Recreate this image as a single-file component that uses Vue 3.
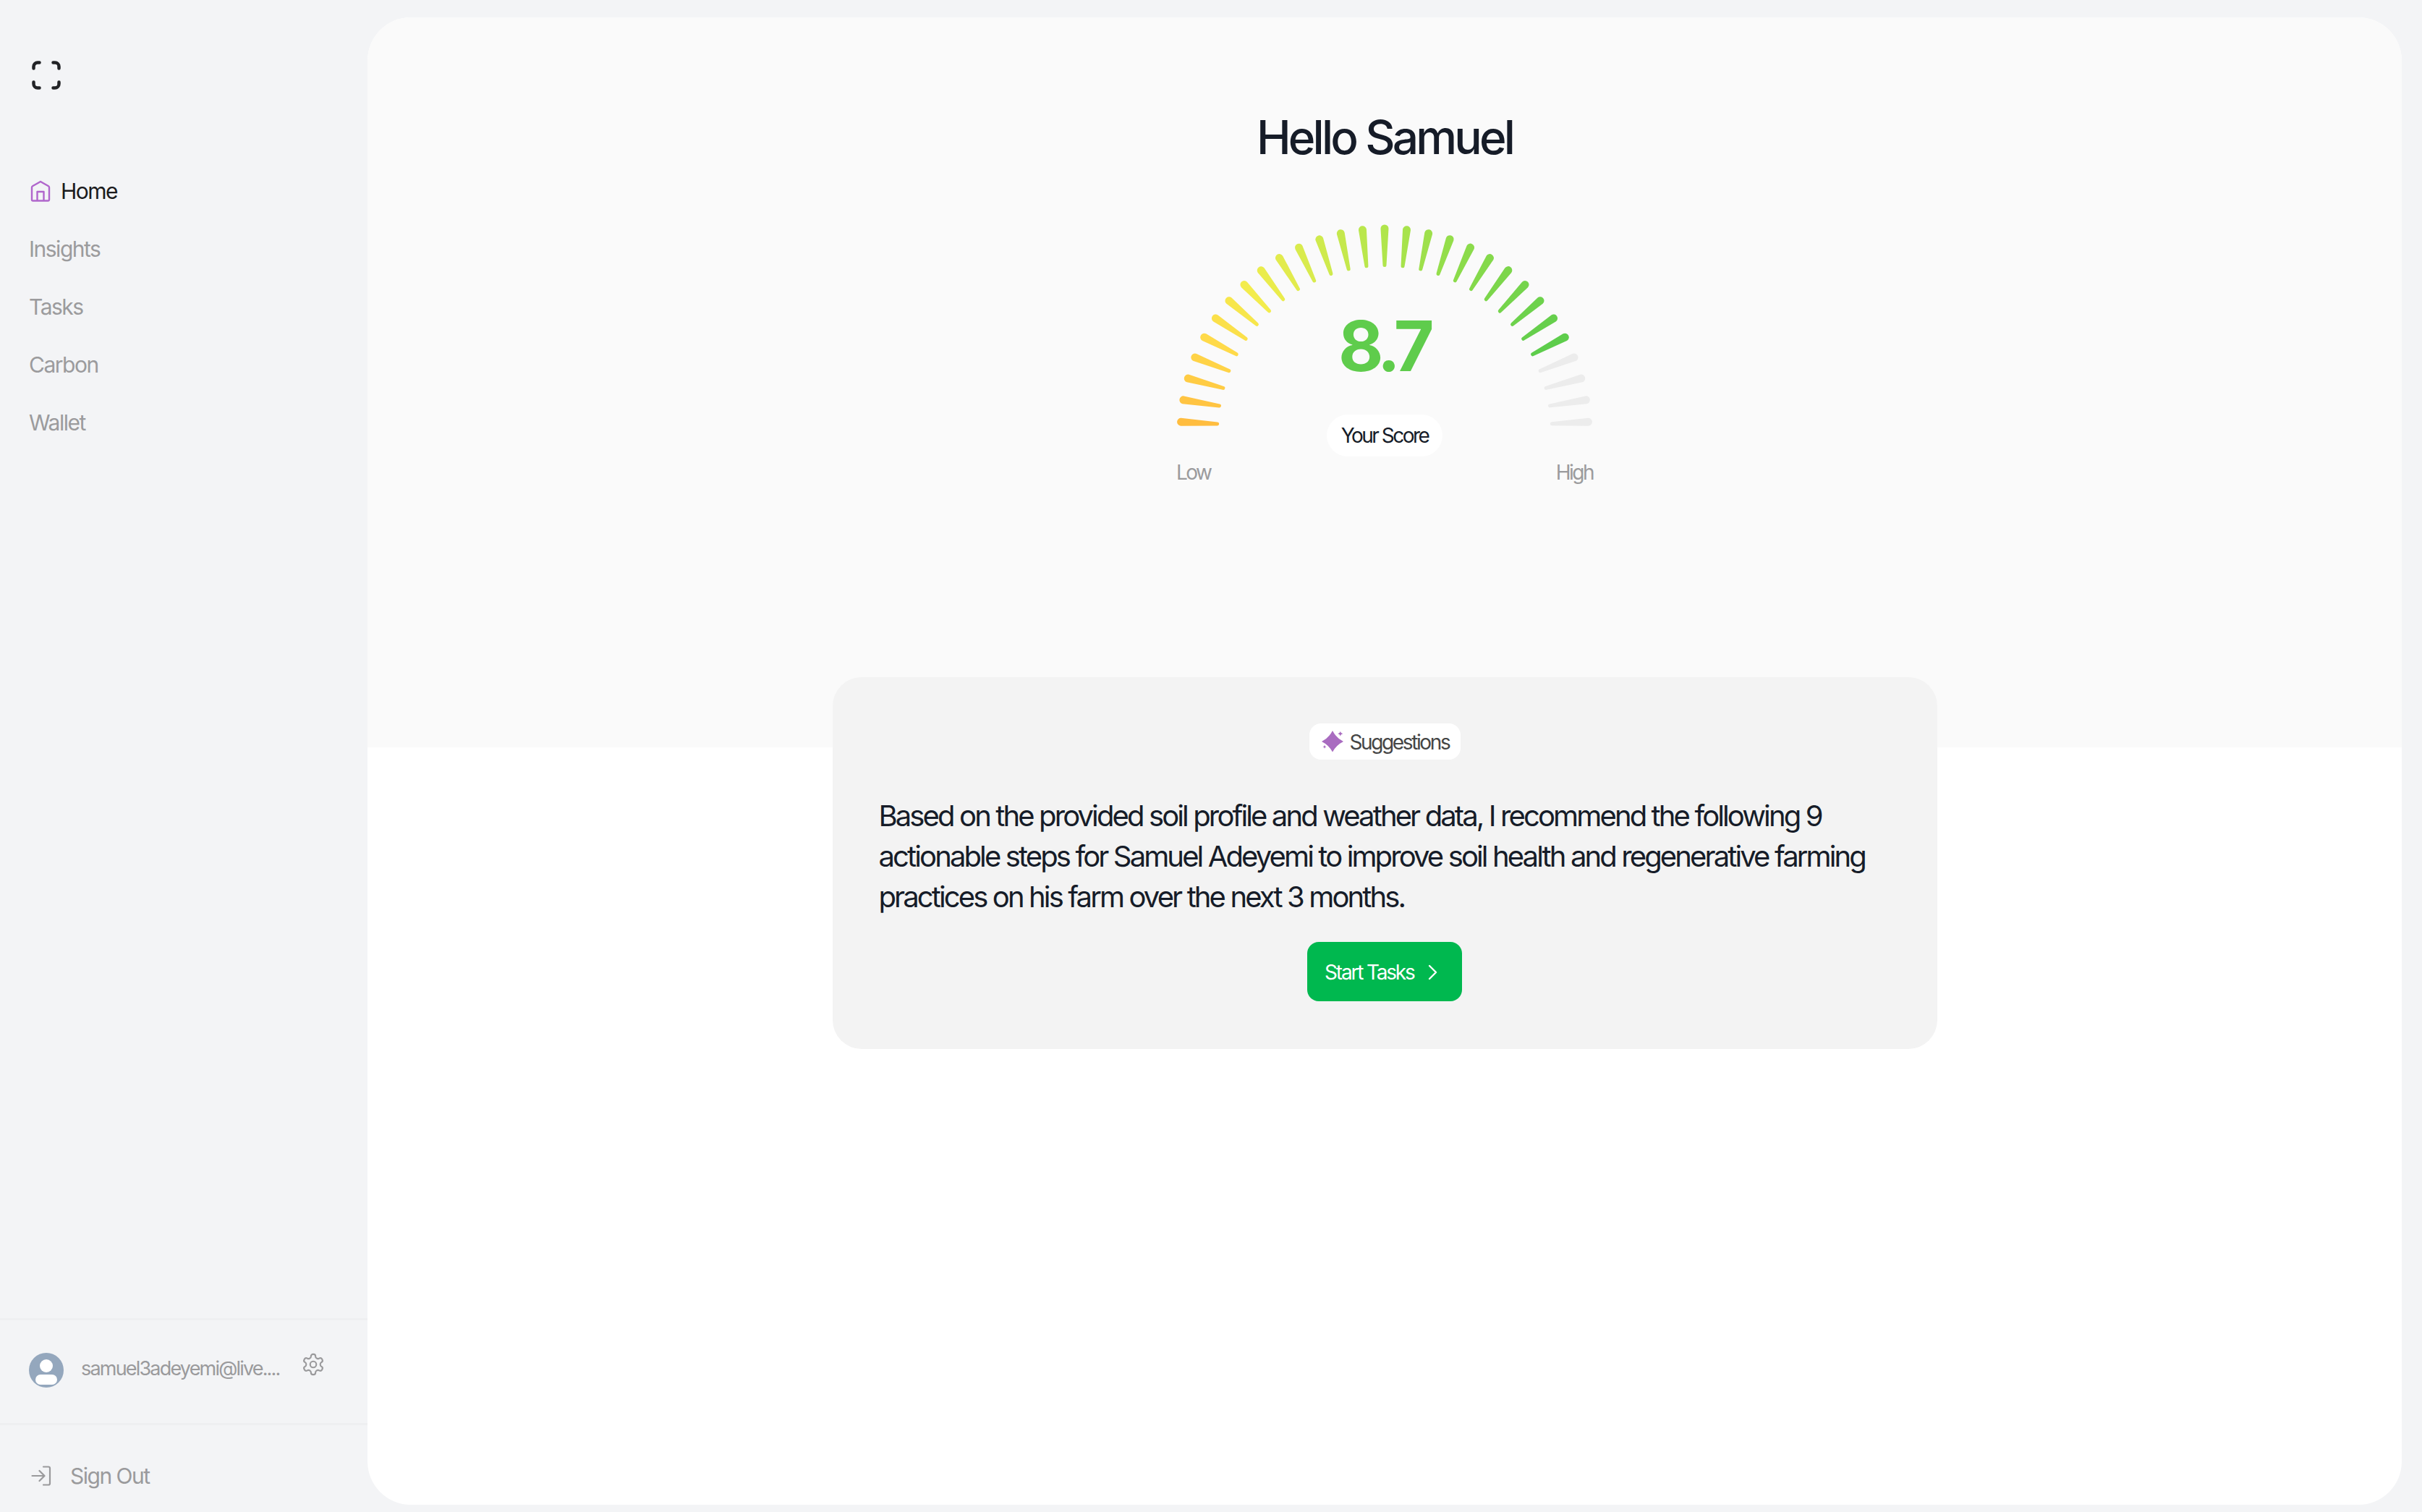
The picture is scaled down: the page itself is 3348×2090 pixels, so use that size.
<template>
  <div class="layout">
    <aside class="sidebar">
      <div class="logo">
        <svg width="40" height="40" viewBox="0 0 40 40" fill="none" stroke="#222326" stroke-width="4.500" stroke-linecap="round">
          <path d="M10.500 2.500H8A5.500 5.500 0 0 0 2.500 8v2.500" />
          <path d="M29.500 2.500H32A5.500 5.500 0 0 1 37.500 8v2.500" />
          <path d="M2.500 29.500V32A5.500 5.500 0 0 0 8 37.500h2.500" />
          <path d="M37.500 29.500V32a5.500 5.500 0 0 1-5.500 5.500h-2.500" />
        </svg>
      </div>

      <nav class="nav">
        <a class="nav-item active">
          <svg width="30" height="30" viewBox="0 0 30 30" fill="none" stroke="#b066cc" stroke-width="2.400" stroke-linejoin="round">
            <path d="M16 2 5 8.300a2 2 0 0 0-1 1.700V27a1.500 1.500 0 0 0 1.500 1.500h21A1.500 1.500 0 0 0 28 27V10a2 2 0 0 0-1-1.700Z" />
            <path d="M11.500 28.500V16h9v12.500" />
          </svg>
          <span>Home</span>
        </a>
        <a v-for="item in links" :key="item" class="nav-item">{{ item }}</a>
      </nav>

      <div class="account">
        <svg class="avatar" width="48" height="48" viewBox="0 0 48 48">
          <circle cx="24" cy="24" r="24" fill="#94a7bd" />
          <circle cx="24" cy="18" r="9" fill="#fff" />
          <rect x="9" y="30" width="30" height="14" rx="7" fill="#fff" />
        </svg>
        <span class="email">samuel3adeyemi@live....</span>
        <svg class="gear" width="34" height="34" viewBox="0 0 24 24" fill="none" stroke="#9a9a9c" stroke-width="1.500" stroke-linecap="round" stroke-linejoin="round">
          <path d="M12.220 2h-.440a2 2 0 0 0-2 2v.180a2 2 0 0 1-1 1.730l-.430.250a2 2 0 0 1-2 0l-.150-.080a2 2 0 0 0-2.730.730l-.220.380a2 2 0 0 0 .730 2.730l.150.100a2 2 0 0 1 1 1.720v.510a2 2 0 0 1-1 1.740l-.150.090a2 2 0 0 0-.730 2.730l.220.380a2 2 0 0 0 2.730.730l.150-.080a2 2 0 0 1 2 0l.430.250a2 2 0 0 1 1 1.730V20a2 2 0 0 0 2 2h.440a2 2 0 0 0 2-2v-.180a2 2 0 0 1 1-1.730l.430-.250a2 2 0 0 1 2 0l.150.080a2 2 0 0 0 2.730-.730l.220-.390a2 2 0 0 0-.730-2.730l-.150-.080a2 2 0 0 1-1-1.740v-.500a2 2 0 0 1 1-1.740l.150-.090a2 2 0 0 0 .730-2.730l-.220-.380a2 2 0 0 0-2.730-.730l-.150.080a2 2 0 0 1-2 0l-.430-.250a2 2 0 0 1-1-1.730V4a2 2 0 0 0-2-2z" />
          <circle cx="12" cy="12" r="3" />
        </svg>
      </div>

      <a class="signout">
        <svg width="28" height="28" viewBox="0 0 28 28" fill="none" stroke="#9a9a9c" stroke-width="2.200" stroke-linecap="round" stroke-linejoin="round">
          <path d="M17 1.500h7a2 2 0 0 1 2 2v21a2 2 0 0 1-2 2h-7" />
          <path d="M1.500 14H18" />
          <path d="m11.500 7 7 7-7 7" />
        </svg>
        <span>Sign Out</span>
      </a>
    </aside>

    <main class="main">
      <section class="hero">
        <h1 class="title">Hello Samuel</h1>
        <div class="gauge">
          <svg width="600" height="300" viewBox="0 0 600 300">
            <path v-for="tick in ticks" :key="tick.id" :d="tick.d" :fill="tick.color" />
          </svg>
          <div class="score">8.7</div>
          <div class="score-label">Your Score</div>
          <span class="low">Low</span>
          <span class="high">High</span>
        </div>
      </section>

      <section class="card">
        <div class="badge">
          <svg width="32" height="32" viewBox="0 0 32 32" fill="#a96cc0">
            <path d="M16 1Q21 11 31 16Q21 21 16 30.500Q11 21 1 16Q11 11 16 1Z" />
            <path d="M26.800 1.500c.3 2 1 3 3.700 3.700-2.700.7-3.400 1.700-3.700 3.700-.3-2-1-3-3.700-3.700 2.700-.7 3.400-1.700 3.700-3.700Z" />
            <path d="M5 20.500c.2 1.700.9 2.400 2.800 2.800-1.900.4-2.600 1.100-2.800 2.800-.2-1.700-.9-2.400-2.800-2.800 1.900-.4 2.600-1.100 2.800-2.800Z" />
          </svg>
          <span>Suggestions</span>
        </div>
        <p class="text">
          Based on the provided soil profile and weather data, I recommend the following 9
          actionable steps for Samuel Adeyemi to improve soil health and regenerative farming
          practices on his farm over the next 3 months.
        </p>
        <button class="start">
          <span>Start Tasks</span>
          <svg width="14" height="22" viewBox="0 0 14 22" fill="none" stroke="#fff" stroke-width="2.400" stroke-linecap="round" stroke-linejoin="round">
            <path d="m3 2 9 9-9 9" />
          </svg>
        </button>
      </section>
    </main>
  </div>
</template>

<script setup>
const links = ['Insights', 'Tasks', 'Carbon', 'Wallet']

// colour stops for the 25 lit ticks, the last 4 stay grey
const stops = [
  [0, [255, 189, 63]],
  [4, [255, 218, 73]],
  [7, [243, 236, 76]],
  [10, [217, 235, 77]],
  [14, [176, 229, 76]],
  [18, [139, 219, 75]],
  [24, [94, 205, 76]],
]

function colorAt(i) {
  if (i > 24) return '#ececec'
  for (let s = 0; s < stops.length - 1; s++) {
    const [a, ca] = stops[s]
    const [b, cb] = stops[s + 1]
    if (i <= b) {
      const t = (i - a) / (b - a)
      const c = ca.map((v, k) => Math.round(v + (cb[k] - v) * t))
      return `rgb(${c.join(',')})`
    }
  }
}

const cx = 300
const cy = 298
const outer = 282
const inner = 231.5
const f = (n) => n.toFixed(2)

const ticks = Array.from({ length: 29 }, (_, i) => {
  const a = ((3 + i * 6.214) * Math.PI) / 180
  const ux = -Math.cos(a)
  const uy = -Math.sin(a)
  const nx = uy
  const ny = -ux
  const ox = cx + ux * outer
  const oy = cy + uy * outer
  const ix = cx + ux * inner
  const iy = cy + uy * inner
  const w = 5.5
  const v = 2.5
  const d =
    `M${f(ox + nx * w)} ${f(oy + ny * w)}` +
    `A${w} ${w} 0 0 1 ${f(ox - nx * w)} ${f(oy - ny * w)}` +
    `L${f(ix - nx * v)} ${f(iy - ny * v)}` +
    `A${v} ${v} 0 0 1 ${f(ix + nx * v)} ${f(iy + ny * v)}Z`
  return { id: i, d, color: colorAt(i) }
})
</script>

<style>
body {
  margin: 0;
  background: #f3f4f6;
}
</style>

<style scoped>
.layout {
  display: flex;
  height: 2090px;
  background: #f3f4f6;
  font-family: Inter, "Liberation Sans", sans-serif;
  color: #161c28;
}

.sidebar {
  width: 508px;
  flex-shrink: 0;
  display: flex;
  flex-direction: column;
}

.logo {
  padding: 84px 0 0 44px;
  height: 40px;
}

.nav {
  margin-top: 100px;
  padding-left: 40px;
  display: flex;
  flex-direction: column;
}

.nav-item {
  height: 80px;
  display: flex;
  align-items: center;
  gap: 14px;
  font-size: 30px;
  letter-spacing: -0.05em;
  color: #9b9b9d;
}

.nav-item.active {
  color: #1b1b1d;
}

.account {
  margin-top: auto;
  height: 138px;
  padding-bottom: 4px;
  border-top: 3px solid #eeeff1;
  border-bottom: 3px solid #eeeff1;
  padding-left: 40px;
  display: flex;
  align-items: center;
  gap: 24px;
}

.email {
  font-size: 27px;
  letter-spacing: -0.067em;
  color: #9a9a9c;
  width: 280px;
  white-space: nowrap;
  margin-top: -6px;
}

.gear {
  margin-top: -16px;
}

.signout {
  height: 120px;
  box-sizing: border-box;
  padding: 20px 0 0 43px;
  display: flex;
  align-items: center;
  gap: 26px;
  font-size: 30px;
  letter-spacing: -0.05em;
  color: #9a9a9c;
}

.main {
  flex: 1;
  margin: 24px 28px 10px 0;
  background: #fff;
  border-radius: 60px;
  overflow: hidden;
}

.hero {
  height: 1009px;
  padding-top: 128px;
  box-sizing: border-box;
  background: #fafafa;
  display: flex;
  flex-direction: column;
  align-items: center;
}

.title {
  margin: 0;
  font-size: 64px;
  line-height: 76px;
  font-weight: 500;
  letter-spacing: -0.06em;
  color: #161c28;
}

.gauge {
  position: relative;
  width: 600px;
  height: 380px;
  margin-top: 72px;
}

.gauge svg {
  display: block;
}

.score {
  position: absolute;
  left: 0;
  right: 2px;
  top: 120px;
  text-align: center;
  font-size: 96px;
  line-height: 116px;
  font-weight: 700;
  letter-spacing: -0.07em;
  color: #5fcc4c;
}

.score-label {
  position: absolute;
  left: 220px;
  top: 273px;
  width: 160px;
  height: 58px;
  border-radius: 29px;
  background: #fff;
  display: flex;
  align-items: center;
  justify-content: center;
  font-size: 28px;
  letter-spacing: -0.09em;
  color: #161c28;
}

.low,
.high {
  position: absolute;
  top: 336px;
  font-size: 28px;
  line-height: 34px;
  letter-spacing: -0.09em;
  color: #9b9b9d;
}

.low {
  left: 12px;
}

.high {
  right: 12px;
}

.card {
  position: relative;
  width: 1527px;
  box-sizing: border-box;
  margin: -97px auto 0;
  padding: 64px 64px 66px;
  background: #f3f3f3;
  border-radius: 40px;
  display: flex;
  flex-direction: column;
  align-items: center;
}

.badge {
  height: 50px;
  width: 209px;
  box-sizing: border-box;
  padding-left: 16px;
  background: #fff;
  border-radius: 16px;
  display: flex;
  align-items: center;
  gap: 8px;
  font-size: 28px;
  letter-spacing: -0.085em;
  color: #454545;
}

.badge span {
  margin-top: 2px;
}

.text {
  margin: 50px 0 34px;
  font-size: 40px;
  line-height: 56px;
  font-weight: 420;
  letter-spacing: -0.072em;
  color: #161c28;
  align-self: stretch;
}

.start {
  width: 214px;
  height: 82px;
  padding: 2px 0 0 24px;
  border: 0;
  border-radius: 16px;
  background: #00b84f;
  color: #fff;
  font-family: inherit;
  font-size: 28px;
  letter-spacing: -0.078em;
  display: flex;
  align-items: center;
  gap: 18px;
}
</style>
